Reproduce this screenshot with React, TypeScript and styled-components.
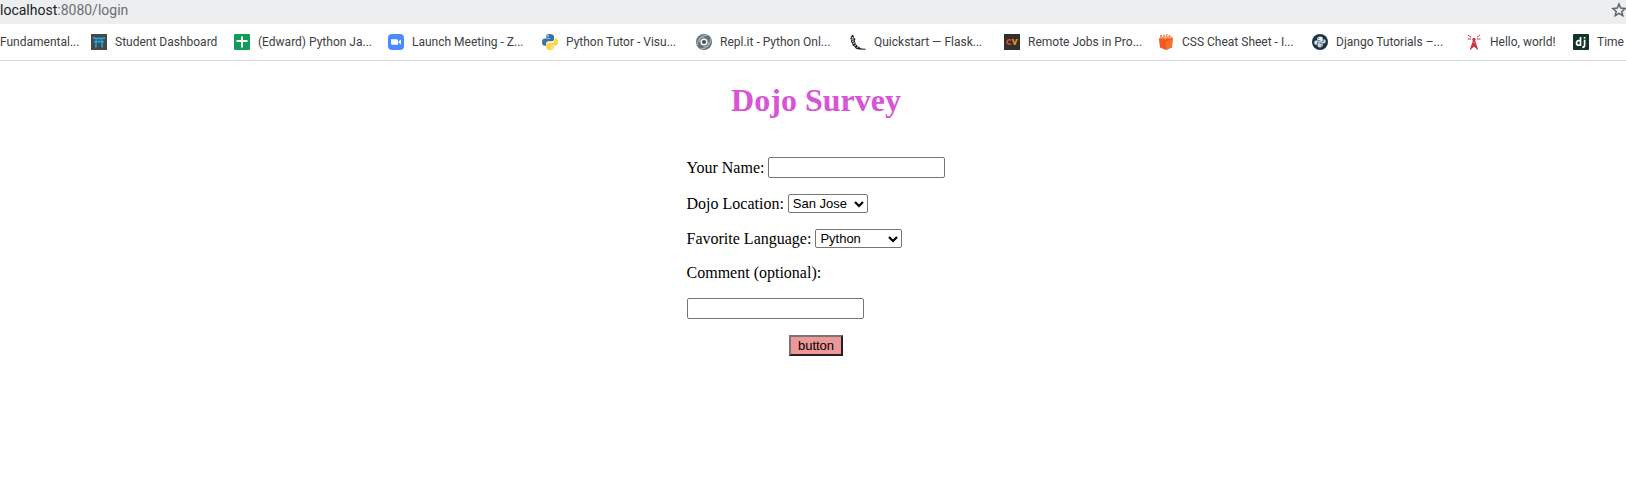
import React from "react";
import styled, { createGlobalStyle } from "styled-components";

const GlobalStyle = createGlobalStyle`
  body {
    margin: 0;
    background: #ffffff;
    color: #000000;
    font-family: "Liberation Serif", "Times New Roman", serif;
    font-size: 16px;
    overflow-x: hidden;
  }
`;

const AddressBar = styled.header`
  display: flex;
  align-items: center;
  justify-content: space-between;
  height: 24px;
  overflow: hidden;
  background: #edeef0;
  color: #6b6e72;
  font-family: Roboto, "Segoe UI", sans-serif;
  font-size: 14px;
  line-height: 20px;
`;

const Address = styled.span`
  padding-bottom: 4px;
`;

const Host = styled.span`
  color: #202124;
`;

const StarButton = styled.button`
  display: flex;
  padding: 0;
  margin-bottom: 4px;
  border: 0;
  background: none;
  color: #5f6368;
`;

const Bookmarks = styled.nav`
  overflow: hidden;
  border-bottom: 1px solid #d9dadc;
`;

const BookmarkList = styled.ul`
  display: flex;
  align-items: center;
  height: 36px;
  margin: 0;
  padding: 0;
  list-style: none;
`;

const BookmarkItem = styled.li<{ $width: number }>`
  flex: 0 0 ${(p) => p.$width}px;
`;

const BookmarkLink = styled.a`
  display: flex;
  align-items: center;
  gap: 8px;
  color: #3c4043;
  font-family: Roboto, "Segoe UI", sans-serif;
  font-size: 12px;
  line-height: 16px;
  white-space: nowrap;
  text-decoration: none;

  svg {
    flex: none;
  }
`;

const Page = styled.main`
  display: flex;
  flex-direction: column;
  align-items: center;
  padding: 21px 0 21px 6px;
`;

const Title = styled.h1`
  margin: 0 0 38px;
  color: #d655d6;
  font-size: 32px;
  line-height: 37px;
`;

const Form = styled.form`
  display: flex;
  flex-direction: column;
  align-items: flex-start;
  gap: 16px;
`;

const Field = styled.div`
  display: flex;
  align-items: center;
  gap: 4px;
  line-height: 18px;
`;

const StackedField = styled(Field)`
  flex-direction: column;
  align-items: flex-start;
  gap: 16px;
`;

const TextInput = styled.input`
  box-sizing: border-box;
  width: 177px;
  height: 21px;
  margin: 0;
  padding: 1px 2px;
  border: 1px solid #767676;
  border-radius: 2px;
  background: #ffffff;
  font-family: "Liberation Sans", Arial, sans-serif;
  font-size: 13px;
`;

const SelectBox = styled.span`
  display: grid;
  align-items: center;

  > * {
    grid-area: 1 / 1;
  }

  svg {
    justify-self: end;
    margin-right: 4px;
    pointer-events: none;
  }
`;

const Select = styled.select<{ $width: number }>`
  appearance: none;
  box-sizing: border-box;
  width: ${(p) => p.$width}px;
  height: 19px;
  margin: 0;
  padding: 0 4px;
  border: 1px solid #767676;
  border-radius: 2px;
  background: #ffffff;
  color: #000000;
  font-family: "Liberation Sans", Arial, sans-serif;
  font-size: 13px;
  line-height: 17px;
`;

const SubmitButton = styled.button`
  align-self: center;
  box-sizing: border-box;
  width: 54px;
  height: 21px;
  padding: 0;
  border: 2px solid;
  border-color: #767676 #212121 #212121 #767676;
  background: #ee9798;
  color: #000000;
  font-family: "Liberation Sans", Arial, sans-serif;
  font-size: 13px;
  line-height: 15px;
`;

const Icon = ({ children }: { children: React.ReactNode }) => (
  <svg width="16" height="16" viewBox="0 0 16 16" aria-hidden="true">
    {children}
  </svg>
);

const ToriiIcon = () => (
  <Icon>
    <rect width="16" height="16" fill="#484849" />
    <path d="M2 3q6 1 12 0v2H2zM3 7h10v1.500H3zM4.500 5H6l-.3 8.500H4zM10 5h1.500l.5 8.500h-1.700zM7.500 5h1v2h-1z" fill="#1ba5dc" />
  </Icon>
);

const SheetIcon = () => (
  <Icon>
    <rect width="16" height="16" rx="1" fill="#109d58" />
    <path d="M7 2.500h2V6h4.500v2H9v5.500H7V8H2.500V6H7z" fill="#fff" />
  </Icon>
);

const ZoomIcon = () => (
  <Icon>
    <rect width="16" height="16" rx="4" fill="#4a8cff" />
    <path d="M3 5.300h5.500q1.500 0 1.500 1.500v4H4.500Q3 10.800 3 9.300zM10.600 7.300L13 5.500v5l-2.400-1.700z" fill="#fff" />
  </Icon>
);

const PythonIcon = () => (
  <Icon>
    <path d="M7.900 0C4.500 0 4.300 1.500 4.300 2.200V4h3.800v.6H2.700C1 4.600 0 6 0 8.100s1 3.700 2.500 3.700h1.600V9.600C4.100 8.200 5.200 7.300 6.500 7.300H10c1.200 0 2-.9 2-2V2.400C12 1 10.600 0 7.900 0z" fill="#3973a5" />
    <path d="M8.100 16c3.400 0 3.700-1.500 3.700-2.200V12H8v-.6h5.400C15 11.400 16 10 16 7.900s-1-3.500-2.300-3.500h-1.300v2.100c0 1.400-1 2.300-2.300 2.300H6.500c-1.300 0-2.200.9-2.200 2v3C4.300 15 5.500 16 8.100 16z" fill="#ffd43b" />
    <circle cx="6" cy="2" r=".8" fill="#fff" />
    <circle cx="10" cy="14" r=".8" fill="#fff" />
  </Icon>
);

const ReplitIcon = () => (
  <Icon>
    <circle cx="8" cy="8" r="8" fill="#65747a" />
    <g fill="none" stroke="#c3ccd0" strokeWidth=".8">
      <path d="M1.500 11C1 6.500 4 2.500 8.500 3.200" />
      <path d="M14.500 5c.5 4.500-2.500 8.500-7 7.800" />
      <path d="M5 14.500c4.500.5 8-2 7.800-6.500" />
      <path d="M11 1.500C6.500 1 3 3.500 3.200 8" />
    </g>
    <circle cx="8" cy="8" r="3.600" fill="#f6f8f8" />
    <circle cx="8" cy="8" r="2.100" fill="#46545b" />
  </Icon>
);

const FlaskIcon = () => (
  <Icon>
    <path d="M2.500.5L1 2.500.3 5l.8 1L1 8l1.200 1.200.3 2 2 1.500 1.500 2 3 .8 6.500.3v-1l-4-.3-2.500-1.500C6.500 11.500 5 9 4.800 6.500L5.500 5 4 3.700 3.800 2z" fill="#222" />
    <path d="M1.800 3.200l1.600.7M1.300 5.300l2.500-.4M1.800 7.300l2.300-.3M2.800 9.600l2-.8M4.400 12l1.800-1.400M6.800 14l1.500-1.700" stroke="#fff" strokeWidth=".9" />
  </Icon>
);

const CvIcon = () => (
  <Icon>
    <rect width="16" height="16" fill="#303030" />
    <path d="M7 6.600A2.200 2.200 0 1 0 7 9.400" fill="none" stroke="#e64b1b" strokeWidth="1.600" />
    <path d="M7.800 5h1.800l1.200 3.500L12 5h1.800l-2.200 6H10z" fill="#f18a1c" />
  </Icon>
);

const FriesIcon = () => (
  <Icon>
    <path d="M2 1h2v2h1V.8h2v1.700h1V0h1.500v2.500h1V1h2v1.500H14V6H2z" fill="#f79468" />
    <path d="M.8 4l3 1 1.500-.8 2 1.200 2.200-1.200 2 .8L15 3.500l-1 10L8 16l-6-2.500z" fill="#ec5a24" />
    <path d="M8 7l6.500-2-.8 8.200L8 16z" fill="#f96f2d" />
  </Icon>
);

const RealPythonIcon = () => (
  <Icon>
    <circle cx="8" cy="8" r="8" fill="#1b3348" />
    <path d="M8 2.500c-2 0-2.700.8-2.700 1.900V6h3v.5H4c-1.200 0-1.700 1-1.700 2.200s.7 2.100 1.700 2.100h.8V9.400c0-1 .7-1.700 1.700-1.700h3c.8 0 1.300-.6 1.300-1.300v-2c0-1.200-1-1.900-2.800-1.900z" fill="#e6edf1" />
    <path d="M8 13.500c2 0 2.700-.8 2.700-1.900V10h-3v-.5H12c1.200 0 1.700-1 1.700-2.200s-.7-2.100-1.700-2.100h-.5v1.400c0 1-.7 1.700-1.700 1.700h-3c-.8 0-1.300.6-1.300 1.300v2c0 1.200.7 1.900 2.500 1.900z" fill="#c9d5dc" />
    <circle cx="6.700" cy="4" r=".6" fill="#1b3348" />
    <circle cx="9.300" cy="12" r=".6" fill="#1b3348" />
  </Icon>
);

const TowerIcon = () => (
  <Icon>
    <g fill="none" stroke="#cf3344">
      <path d="M8 5.500L4.500 15.500M8 5.500l3.500 10M6.700 9.500h2.600M5.800 12h4.400M6.500 10l4 4M9.500 10l-4 4" strokeWidth="1.300" />
      <path d="M2 1l3 2.300M1.500 5H5M14 1l-3 2.300M14.500 5H11" strokeWidth="1" />
    </g>
    <circle cx="8" cy="5.500" r="1.700" fill="#cf3344" />
  </Icon>
);

const DjangoIcon = () => (
  <Icon>
    <rect width="16" height="16" rx="1" fill="#113527" />
    <g fill="none" stroke="#fff" strokeWidth="1.700">
      <path d="M7.500 3v8.200H5.700C2.800 11.200 2.800 6.600 5.700 6.600h1.800" />
      <path d="M11.600 5.800v5.500q0 2-2.400 2M11.600 3v1.600" />
    </g>
  </Icon>
);

const StarIcon = () => (
  <svg width="15" height="16" viewBox="0 0 15 16" aria-hidden="true">
    <path d="M8 2l1.700 4.100 4.400.4-3.300 2.900 1 4.300L8 11.400l-3.800 2.300 1-4.300-3.300-2.900 4.400-.4z" fill="none" stroke="currentColor" strokeWidth="1.500" />
  </svg>
);

const Chevron = () => (
  <svg width="10" height="8" viewBox="0 0 10 8" aria-hidden="true">
    <path d="M1 2l4 4 4-4" fill="none" stroke="#000" strokeWidth="2.200" />
  </svg>
);

const bookmarks = [
  { title: "Fundamental...", width: 91 },
  { title: "Student Dashboard", icon: ToriiIcon, width: 143 },
  { title: "(Edward) Python Ja...", icon: SheetIcon, width: 154 },
  { title: "Launch Meeting - Z...", icon: ZoomIcon, width: 154 },
  { title: "Python Tutor - Visu...", icon: PythonIcon, width: 154 },
  { title: "Repl.it - Python Onl...", icon: ReplitIcon, width: 154 },
  { title: "Quickstart — Flask...", icon: FlaskIcon, width: 154 },
  { title: "Remote Jobs in Pro...", icon: CvIcon, width: 154 },
  { title: "CSS Cheat Sheet - I...", icon: FriesIcon, width: 154 },
  { title: "Django Tutorials –...", icon: RealPythonIcon, width: 154 },
  { title: "Hello, world!", icon: TowerIcon, width: 107 },
  { title: "Time", icon: DjangoIcon, width: 53 },
];

export default function App() {
  return (
    <>
      <GlobalStyle />
      <AddressBar>
        <Address>
          <Host>localhost</Host>:8080/login
        </Address>
        <StarButton type="button" aria-label="Bookmark this page">
          <StarIcon />
        </StarButton>
      </AddressBar>
      <Bookmarks aria-label="Bookmarks">
        <BookmarkList>
          {bookmarks.map(({ title, icon: Favicon, width }) => (
            <BookmarkItem key={title} $width={width}>
              <BookmarkLink href="#">
                {Favicon && <Favicon />}
                {title}
              </BookmarkLink>
            </BookmarkItem>
          ))}
        </BookmarkList>
      </Bookmarks>
      <Page>
        <Title>Dojo Survey</Title>
        <Form onSubmit={(event) => event.preventDefault()}>
          <Field>
            <label htmlFor="name">Your Name:</label>
            <TextInput id="name" type="text" />
          </Field>
          <Field>
            <label htmlFor="location">Dojo Location:</label>
            <SelectBox>
              <Select id="location" $width={80}>
                <option>San Jose</option>
              </Select>
              <Chevron />
            </SelectBox>
          </Field>
          <Field>
            <label htmlFor="language">Favorite Language:</label>
            <SelectBox>
              <Select id="language" $width={87}>
                <option>Python</option>
              </Select>
              <Chevron />
            </SelectBox>
          </Field>
          <StackedField>
            <label htmlFor="comment">Comment (optional):</label>
            <TextInput id="comment" type="text" />
          </StackedField>
          <SubmitButton type="submit">button</SubmitButton>
        </Form>
      </Page>
    </>
  );
}
